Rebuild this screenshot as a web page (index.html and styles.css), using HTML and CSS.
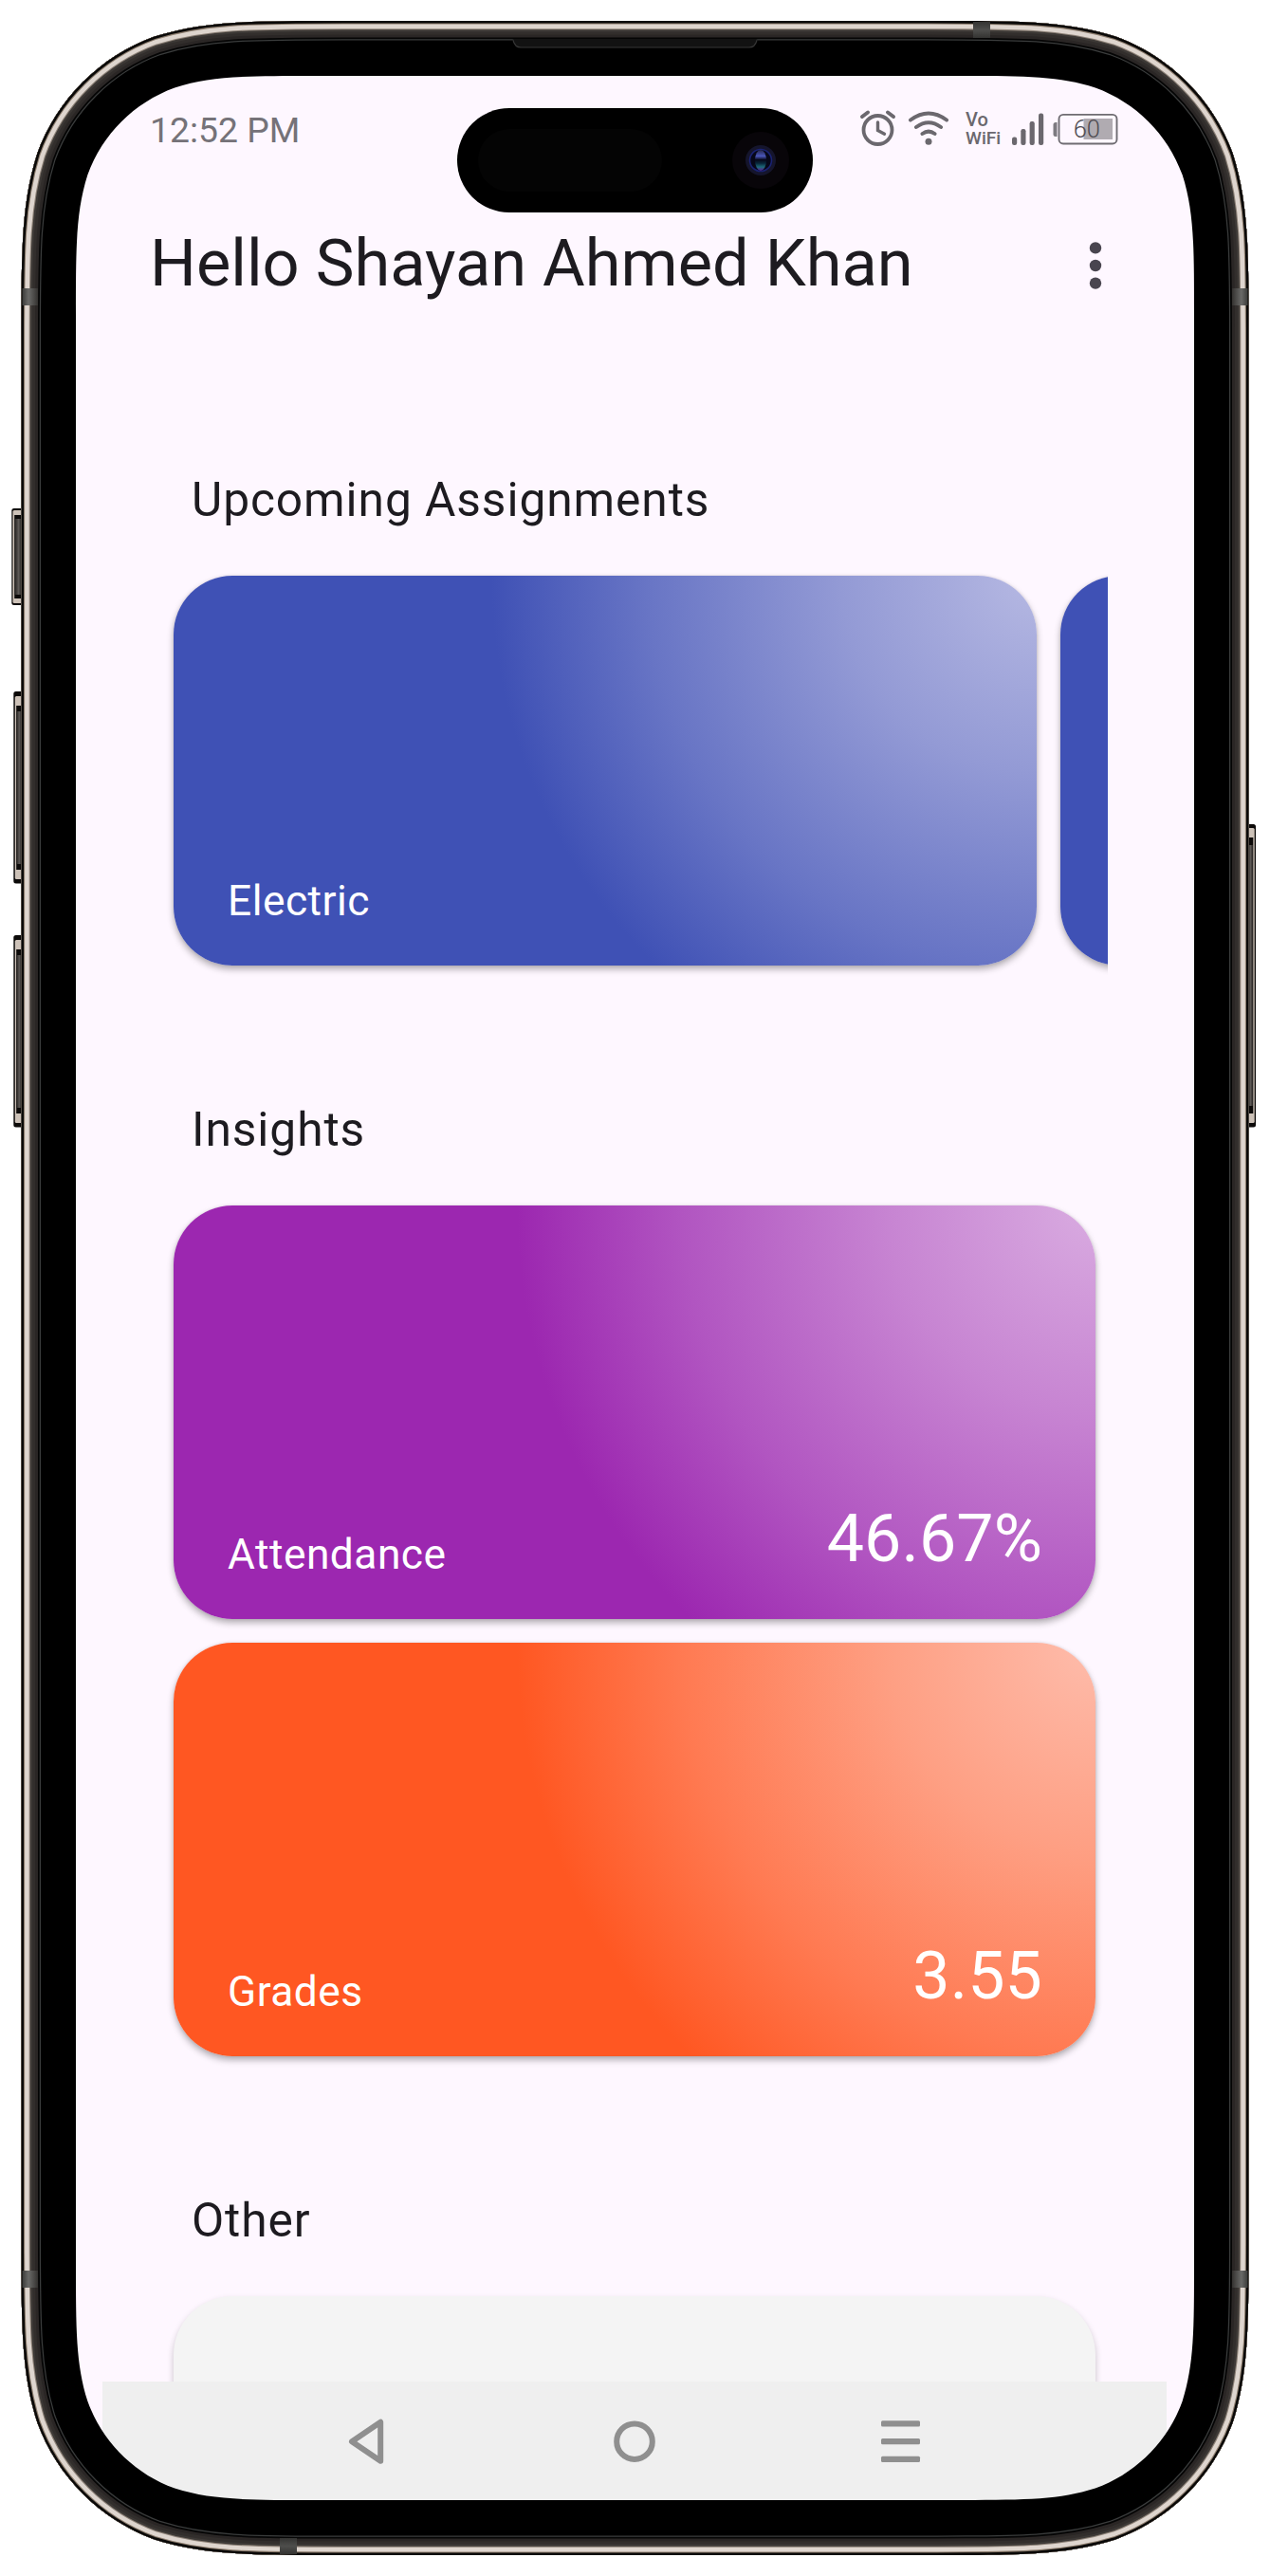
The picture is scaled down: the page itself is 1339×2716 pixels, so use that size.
FILE: index.html
```html
<!DOCTYPE html>
<html lang="en">
<head>
<meta charset="utf-8">
<title>Student dashboard</title>
<link rel="stylesheet" href="styles.css">
</head>
<body>
<div class="phone">
  <div class="screen">
    <div class="status-bar">
      <span class="clock">12:52 PM</span>
      <div class="status-icons">
        <!-- alarm -->
        <svg width="50" height="48" viewBox="900 112 50 48" fill="none" stroke="#6b686e" stroke-width="3.8" stroke-linecap="round">
          <circle cx="925.5" cy="137" r="15"/>
          <path d="M925.5 129v8.5l7 3.8" stroke-width="3.4"/>
          <path d="M909 123l6-4.500M942 123l-6-4.500" stroke-width="4"/>
        </svg>
        <!-- wifi -->
        <svg width="60" height="48" viewBox="950 112 60 48" fill="none" stroke="#6b686e" stroke-width="4" stroke-linecap="round">
          <path d="M960 126.500Q979 112.500 998 126.500M966 134Q979 124.500 992 134M972.500 141Q979 136.300 985.500 141"/>
          <circle cx="979" cy="149.300" r="3.500" fill="#6b686e" stroke="none"/>
        </svg>
        <span class="vowifi"><span class="vo">Vo</span><span class="wifi">WiFi</span></span>
        <!-- signal -->
        <svg width="45" height="48" viewBox="1060 112 45 48" fill="#6b686e">
          <rect x="1067" y="144.500" width="5.200" height="8.500" rx="2.200"/>
          <rect x="1076.300" y="136" width="5.200" height="17" rx="2.200"/>
          <rect x="1085.600" y="128" width="5.200" height="25" rx="2.200"/>
          <rect x="1095" y="119.500" width="5.200" height="33.500" rx="2.200"/>
        </svg>
        <!-- battery -->
        <svg width="75" height="48" viewBox="1105 112 75 48">
          <path d="M1114.500 129v15h-1.500a2.500 2.500 0 0 1-2.500-2.500v-10a2.500 2.500 0 0 1 2.500-2.500z" fill="#7d7a80"/>
          <rect x="1116.500" y="120.900" width="61" height="30.600" rx="4.500" fill="none" stroke="#6f6c72" stroke-width="1.900"/>
          <rect x="1142.500" y="125" width="30.500" height="22" fill="#b0abb1"/>
          <text class="battery-level" x="1131.700" y="144.800">60</text>
        </svg>
      </div>
    </div>

    <header class="app-bar">
      <h1>Hello Shayan Ahmed Khan</h1>
      <svg class="more" width="68" height="68" viewBox="0 0 68 68" fill="#49454f">
        <circle cx="34" cy="15.400" r="6.200"/><circle cx="34" cy="34" r="6.200"/><circle cx="34" cy="52.600" r="6.200"/>
      </svg>
    </header>

    <main class="content">
      <section class="section">
        <h2>Upcoming Assignments</h2>
        <div class="carousel">
          <article class="card card-blue card-slide"><span class="label">Electric</span></article>
          <article class="card card-blue card-slide"></article>
        </div>
      </section>
      <section class="section">
        <h2>Insights</h2>
        <div class="stack">
          <article class="card card-purple"><span class="label">Attendance</span><span class="value">46.67%</span></article>
          <article class="card card-orange"><span class="label">Grades</span><span class="value">3.55</span></article>
        </div>
      </section>
      <section class="section">
        <h2>Other</h2>
        <article class="card card-plain"></article>
      </section>
    </main>

    <nav class="nav-bar">
      <svg width="60" height="60" viewBox="356 2543.500 60 60" fill="none" stroke="#8f8f8f" stroke-width="6" stroke-linejoin="round">
        <path d="M371 2573.700L401.200 2553.200V2594.200Z"/>
      </svg>
      <svg width="60" height="60" viewBox="638 2543.500 60 60" fill="none" stroke="#8f8f8f" stroke-width="6">
        <circle cx="669" cy="2573.700" r="18.800"/>
      </svg>
      <svg width="60" height="60" viewBox="920 2543.500 60 60" fill="#8f8f8f">
        <rect x="929" y="2551.800" width="41" height="6.200" rx="1.500"/>
        <rect x="929" y="2570.500" width="41" height="6.200" rx="1.500"/>
        <rect x="929" y="2589.300" width="41" height="6.200" rx="1.500"/>
      </svg>
    </nav>
  </div>

  <!-- device frame laid over the screen -->
  <svg class="frame" width="1339" height="2716" viewBox="0 0 1339 2716">
    <defs>
      <path id="body-outline" d="M361.900 22H977.100c97.800 0 146.600 0 199.200 16.600c57.400 20.900 102.700 66.200 123.600 123.600c16.600 52.600 16.600 101.400 16.600 199.200V2354.600c0 97.800 0 146.600 -16.600 199.200c-20.900 57.400 -66.200 102.700 -123.600 123.600c-52.600 16.600 -101.400 16.600 -199.200 16.600H361.900c-97.800 0 -146.600 0 -199.200 -16.600c-57.400 -20.900 -102.700 -66.200 -123.600 -123.600c-16.600 -52.600 -16.600 -101.400 -16.600 -199.200V361.400c0 -97.800 0 -146.600 16.600 -199.200c20.900 -57.400 66.200 -102.700 123.600 -123.600c52.600 -16.600 101.400 -16.600 199.200 -16.600z"/>
      <clipPath id="body-clip"><use href="#body-outline"/></clipPath>
      <linearGradient id="side-key" x1="0" x2="1" y1="0" y2="0">
        <stop offset="0" stop-color="#2a2725"/><stop offset=".5" stop-color="#5d5956"/><stop offset="1" stop-color="#24211f"/>
      </linearGradient>
      <linearGradient id="band" x1="0" x2="0" y1="0" y2="1">
        <stop offset="0" stop-color="#343432"/><stop offset=".5" stop-color="#4e4e4c"/><stop offset="1" stop-color="#343432"/>
      </linearGradient>
      <linearGradient id="band-left" x1="0" x2="1" y1="0" y2="0">
        <stop offset="0" stop-color="#3a3a38"/><stop offset=".4" stop-color="#6a6a68"/><stop offset="1" stop-color="#343230"/>
      </linearGradient>
      <linearGradient id="band-right" x1="1" x2="0" y1="0" y2="0">
        <stop offset="0" stop-color="#3a3a38"/><stop offset=".4" stop-color="#6a6a68"/><stop offset="1" stop-color="#343230"/>
      </linearGradient>
      <linearGradient id="lens" x1="0" x2="0" y1="0" y2="1">
        <stop offset="0" stop-color="#24264a"/><stop offset=".3" stop-color="#4a56b8"/><stop offset=".48" stop-color="#060718"/><stop offset=".65" stop-color="#08283c"/><stop offset=".82" stop-color="#1d6a78"/><stop offset="1" stop-color="#5a1a90"/>
      </linearGradient>
    </defs>

    <!-- side keys -->
    <g>
      <rect x="12.300" y="536" width="14" height="102" rx="2.500" fill="#0c0a09"/>
      <rect x="13.500" y="538" width="12" height="98" rx="1.500" fill="#cdc2b8"/>
      <rect x="15.200" y="543" width="8" height="88" fill="#0c0a09"/>
      <rect x="16" y="547" width="7" height="80" fill="url(#side-key)"/>

      <rect x="14.300" y="729" width="12" height="202.500" rx="2.500" fill="#0c0a09"/>
      <rect x="15.800" y="734" width="10" height="193" rx="1.500" fill="#cdc2b8"/>
      <rect x="17.200" y="744" width="6" height="173" fill="#0c0a09"/>
      <rect x="17.800" y="750" width="5" height="161" fill="url(#side-key)"/>

      <rect x="14.300" y="986" width="12" height="202.500" rx="2.500" fill="#0c0a09"/>
      <rect x="15.800" y="991" width="10" height="193" rx="1.500" fill="#cdc2b8"/>
      <rect x="17.200" y="1001" width="6" height="173" fill="#0c0a09"/>
      <rect x="17.800" y="1007" width="5" height="161" fill="url(#side-key)"/>

      <rect x="1312" y="869" width="12" height="319.500" rx="2.500" fill="#0c0a09"/>
      <rect x="1313" y="873" width="9.700" height="311" rx="1.500" fill="#cdc2b8"/>
      <rect x="1315.500" y="883" width="5.800" height="291" fill="#0c0a09"/>
      <rect x="1316" y="891" width="5" height="275" fill="url(#side-key)"/>
    </g>

    <!-- bezel with the screen cut out -->
    <path fill-rule="evenodd" d="M361.900 22H977.100c97.800 0 146.600 0 199.200 16.600c57.400 20.900 102.700 66.200 123.600 123.600c16.600 52.600 16.600 101.400 16.600 199.200V2354.600c0 97.800 0 146.600 -16.600 199.200c-20.900 57.400 -66.200 102.700 -123.600 123.600c-52.600 16.600 -101.400 16.600 -199.200 16.600H361.900c-97.800 0 -146.600 0 -199.200 -16.600c-57.400 -20.900 -102.700 -66.200 -123.600 -123.600c-16.600 -52.600 -16.600 -101.400 -16.600 -199.200V361.400c0 -97.800 0 -146.600 16.600 -199.200c20.900 -57.400 66.200 -102.700 123.600 -123.600c52.600 -16.600 101.400 -16.600 199.200 -16.600z
      M332.200 80H1006.800c72.600 0 108.900 0 148 12.400c42.700 15.500 76.300 49.100 91.800 91.800c12.400 39.100 12.400 75.400 12.400 148V2383.800c0 72.600 0 108.900 -12.400 148c-15.500 42.700 -49.100 76.300 -91.800 91.800c-39.100 12.400 -75.400 12.400 -148 12.400H332.200c-72.600 0 -108.900 0 -148 -12.400c-42.700 -15.500 -76.300 -49.100 -91.800 -91.800c-12.400 -39.100 -12.400 -75.400 -12.400 -148V332.200c0 -72.600 0 -108.900 12.400 -148c15.500 -42.700 49.100 -76.300 91.800 -91.800c39.100 -12.400 75.400 -12.400 148 -12.400z"/>

    <!-- metal rim, widest stroke first -->
    <g clip-path="url(#body-clip)" fill="none">
      <use href="#body-outline" stroke="#3a3c3c" stroke-width="41"/>
      <use href="#body-outline" stroke="#050505" stroke-width="38.500"/>
      <use href="#body-outline" stroke="#2a2625" stroke-width="35"/>
      <use href="#body-outline" stroke="#322e2c" stroke-width="29"/>
      <use href="#body-outline" stroke="#3d3936" stroke-width="23"/>
      <use href="#body-outline" stroke="#8c8177" stroke-width="18.600"/>
      <use href="#body-outline" stroke="#ded5ce" stroke-width="16.400"/>
      <use href="#body-outline" stroke="#897a6b" stroke-width="7.200"/>
      <use href="#body-outline" stroke="#0a0908" stroke-width="5"/>
    </g>

    <!-- antenna bands -->
    <rect x="1026" y="23" width="18" height="17" fill="url(#band)"/>
    <rect x="295" y="2676" width="18" height="17" fill="url(#band)"/>
    <rect x="23.500" y="304" width="16.500" height="18" fill="url(#band-left)"/>
    <rect x="23.500" y="2394" width="16.500" height="18" fill="url(#band-left)"/>
    <rect x="1299" y="304" width="16.500" height="18" fill="url(#band-right)"/>
    <rect x="1299" y="2394" width="16.500" height="18" fill="url(#band-right)"/>

    <!-- earpiece -->
    <path d="M540 41h259q-2 0-2 3q-2 6-7 6H549q-5 0-7-6q0-3-2-3z" fill="#121212"/>
    <path d="M541 42.500q2 7.500 8 7.500H790q6 0 8-7.500" fill="none" stroke="#363636" stroke-width="1.200"/>

    <!-- camera island -->
    <rect x="482" y="114" width="375" height="110" rx="55"/>
    <rect x="504" y="136" width="194" height="66" rx="33" fill="#040404"/>
    <circle cx="802" cy="169" r="30" fill="#080509"/>
    <circle cx="802" cy="169" r="16" fill="#15152c"/>
    <circle cx="802" cy="169" r="11.500" fill="#060718" stroke="#1a2272" stroke-width="1.600"/>
    <ellipse cx="802" cy="169" rx="6" ry="11" fill="url(#lens)"/>
  </svg>
</div>
</body>
</html>
```
FILE: styles.css
```css
* {
  box-sizing: border-box;
}

body {
  margin: 0;
  background: #fff;
  font-family: Roboto, "Liberation Sans", sans-serif;
  color: #1d1b20;
}

h1,
h2 {
  margin: 0;
  font-weight: 400;
}

svg {
  display: block;
  flex: none;
}

.phone {
  position: relative;
  width: 1339px;
  height: 2716px;
  padding: 80px;
  overflow: hidden;
}

.screen {
  display: flex;
  flex-direction: column;
  width: 1179px;
  height: 2556px;
  background: #fef7ff;
  border-radius: 130px;
  overflow: hidden;
}

.frame {
  position: absolute;
  inset: 0;
  pointer-events: none;
}

/* Status bar */

.status-bar {
  display: flex;
  justify-content: space-between;
  height: 158px;
  padding: 32px 79px 0 78px;
}

.clock {
  font-size: 37.3px;
  line-height: 48px;
  padding-top: 1px;
  color: #757278;
}

.status-icons {
  display: flex;
  height: 48px;
}

.vowifi {
  display: flex;
  flex-direction: column;
  width: 50px;
  padding: 5px 0 0 8px;
  font-size: 19.2px;
  font-weight: 500;
  line-height: 19px;
  color: #6b686e;
}

.vo {
  font-size: 20px;
}

.battery-level {
  font-family: Roboto, "Liberation Sans", sans-serif;
  font-size: 25.5px;
  font-weight: 300;
  fill: #4f4c52;
}

/* App bar */

.app-bar {
  display: flex;
  align-items: center;
  justify-content: space-between;
  height: 80px;
  padding: 0 70px 0 78px;
}

.app-bar h1 {
  font-size: 68.57px;
  line-height: 80px;
}

.more {
  margin-top: 3px;
}

/* Content */

.content {
  flex: 1;
  min-height: 0;
  display: flex;
  flex-direction: column;
  gap: 144px;
  padding: 180px 104px 0 103px;
  overflow: hidden;
}

.section {
  display: flex;
  flex-direction: column;
  gap: 51px;
}

.section h2 {
  padding-left: 19px;
  font-size: 49.7px;
  line-height: 58px;
  letter-spacing: 0.91px;
}

.carousel {
  display: flex;
  gap: 25px;
  width: 998px;
  margin-left: -13px;
  padding-left: 13px;
  overflow-x: clip;
  overflow-y: visible;
}

.stack {
  display: flex;
  flex-direction: column;
  gap: 25px;
}

.card {
  display: flex;
  flex: none;
  align-items: flex-end;
  justify-content: space-between;
  height: 436px;
  padding: 0 56px 42px 57px;
  border-radius: 62px;
  box-shadow: 0 4px 7px rgba(0, 0, 0, 0.3), 0 0 3px rgba(0, 0, 0, 0.1);
  color: #fff;
}

.card-slide {
  width: 910px;
  height: 411px;
}

.card-blue {
  background: radial-gradient(circle 575px at 100% 0, #b2b5e1 4%, #939ad5 36%, #6875c5 71.5%, #3f51b5);
}

.card-purple {
  background: radial-gradient(circle 610px at 100% 0, #d7a7df 4%, #c784d2 36%, #b155c1 71.5%, #9c27b0);
}

.card-orange {
  background: radial-gradient(circle 610px at 100% 0, #feb9a7 4%, #fe9f83 36%, #ff7a52 71.5%, #ff5722);
}

.card-plain {
  background: #f4f4f4;
  box-shadow: 0 4px 7px rgba(0, 0, 0, 0.22);
}

.label {
  font-size: 44.3px;
  line-height: 52px;
  letter-spacing: 0.48px;
}

.value {
  margin-bottom: 3px;
  font-size: 69.9px;
  line-height: 80px;
  letter-spacing: 0.1px;
}

/* System navigation */

.nav-bar {
  display: flex;
  align-items: center;
  gap: 222px;
  height: 125px;
  margin: 0 29px 0 28px;
  padding-left: 248px;
  background: #efefef;
}
```
